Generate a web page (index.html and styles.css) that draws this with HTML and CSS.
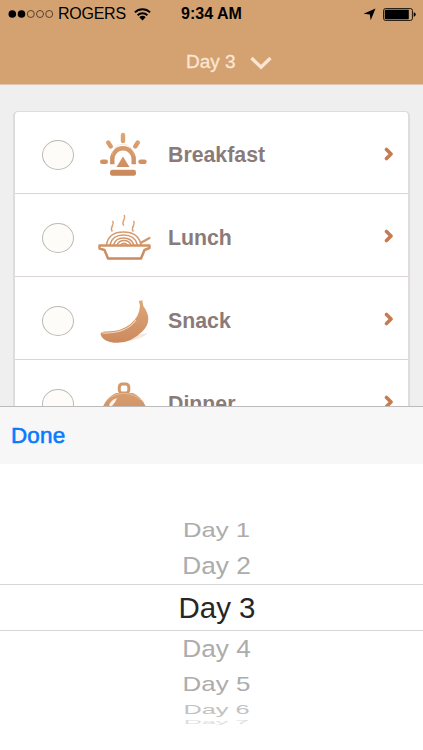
FILE: index.html
```html
<!DOCTYPE html>
<html lang="en">
<head>
<meta charset="utf-8">
<title>Meals</title>
<link rel="stylesheet" href="styles.css">
</head>
<body>
<svg class="defs" width="0" height="0" aria-hidden="true">
  <defs>
    <linearGradient id="copper" gradientUnits="userSpaceOnUse" x1="0" y1="10" x2="0" y2="60">
      <stop offset="0" stop-color="#dfa878"/><stop offset="1" stop-color="#c8855a"/>
    </linearGradient>
    <symbol id="chevron" viewBox="0 0 10 14"><path d="M2.500 2.500l4.500 4.500-4.500 4.500" fill="none" stroke="#c67c50" stroke-width="3.600" stroke-linecap="round" stroke-linejoin="round"/></symbol>
  </defs>
</svg>
<div class="screen">
  <header class="header">
    <div class="status">
      <div class="carrier">
        <svg width="46" height="10" viewBox="0 0 46 10"><g fill="#000"><circle cx="4.3" cy="5" r="3.8"/><circle cx="13.5" cy="5" r="3.8"/></g><g fill="none" stroke="#38291c" stroke-width=".8"><circle cx="22.8" cy="5" r="3.5"/><circle cx="32" cy="5" r="3.5"/><circle cx="41.2" cy="5" r="3.5"/></g></svg>
        <span class="network">ROGERS</span>
        <svg class="wifi" width="17" height="13" viewBox="0 0 17 13"><g fill="none" stroke="#000" stroke-width="1.9"><path d="M.9 4.4a10.8 10.8 0 0 1 15.2 0"/><path d="M3.6 7.3a7 7 0 0 1 9.8 0"/></g><path d="M5.3 9.2a4.5 4.5 0 0 1 6.4 0L8.5 12.4z"/></svg>
      </div>
      <span class="time">9:34 AM</span>
      <div class="power">
        <svg width="13" height="13" viewBox="0 0 13 13"><path d="M12.5.5L7.7 12.3 6.8 6.4.6 5.7z"/></svg>
        <svg width="33" height="13" viewBox="0 0 33 13"><rect x=".6" y=".6" width="28.8" height="11.8" rx="1.8" fill="none" stroke="#1c140d"/><rect x="1.8" y="1.8" width="24" height="9.4" rx=".8"/><path d="M30.7 4.3q2 .5 2 2.2t-2 2.2z"/></svg>
      </div>
    </div>
    <div class="title">
      <span>Day 3</span>
      <svg width="22" height="14" viewBox="0 0 22 14"><path d="M1.500 2l9.500 9.300L20.500 2" fill="none" stroke="#fce6d3" stroke-width="3.300"/></svg>
    </div>
  </header>
  <main class="content">
    <ul class="meals">
      <li class="meal">
        <span class="check"></span>
        <svg class="icon sunrise" viewBox="0 0 70 70"><g fill="none" stroke="url(#copper)" stroke-width="4.400" stroke-linecap="round"><path d="M33 15v6M18.200 22.500l2.600 4M47.800 22.500l-2.600 4M12.200 41.800h3.600M50.500 41.800h4"/><path d="M22.300 44.300v-5.300a10.700 10.700 0 0 1 21.400 0v5.300" stroke-linecap="butt"/></g><rect x="20" y="49.800" width="26" height="6" rx="2.400" fill="url(#copper)"/><path d="M33 36.500L39.500 47h-13z" fill="url(#copper)"/><path d="M22.300 35a10.700 10.700 0 0 1 21.400 0" fill="none" stroke="#f0c9a5" stroke-width=".7" opacity=".6"/></svg>
        <span class="name">Breakfast</span><svg class="arrow"><use href="#chevron"/></svg>
      </li>
      <li class="meal">
        <span class="check"></span>
        <svg class="icon bowl" viewBox="0 0 70 70"><g fill="none" stroke="url(#copper)" stroke-width="1.5" stroke-linecap="round" stroke-linejoin="round"><path d="M16.500 40q2-13 17-13T51 40M20 40q2-10 13.500-10T47.500 40M23.500 40q2-7 10-7t10.500 7M27 40q2-4.500 7-4.500t7 4.500M30.500 40q3.500-3.500 7 0"/><path d="M22 26c-2.500-4 3-6 .8-9.500M33.500 20c-2.500-4 3-6 .8-9.500M43 26c-2.500-4 3-6 .8-9.500"/><path stroke-width="2.200" d="M51 37.800l8.500-4.800"/><path stroke-width="2.500" d="M9.500 40.500h50v2.500l-5 2-3.500 8.500H18L14.500 45l-5-1.500z" fill="#fff"/></g></svg>
        <span class="name">Lunch</span><svg class="arrow"><use href="#chevron"/></svg>
      </li>
      <li class="meal">
        <span class="check"></span>
        <svg class="icon banana" viewBox="0 0 70 70"><path d="M33 52Q47 44 57 43Q54 49 33 52z" fill="#f3e7df"/><path d="M48.800 10.900l3.500-.6 1 5.700q10.500 14-1 25.500Q38 56 20 52q-8-2-9.500-8 .5-2.500 5-2.500 15 .5 25-7.500 9-7.500 9.500-18.500z" fill="url(#copper)"/><path d="M12 43q24 1 34-13" fill="none" stroke="#f3d4b8" stroke-width="1.200"/></svg>
        <span class="name">Snack</span><svg class="arrow"><use href="#chevron"/></svg>
      </li>
      <li class="meal">
        <span class="check"></span>
        <svg class="icon cloche" viewBox="0 0 70 70"><path d="M10.500 48q2-18 15.500-24h17q13 6 15.500 24z" fill="url(#copper)"/><rect x="29.300" y="15" width="9.500" height="9" rx="3" fill="#fff" stroke="#d29a6b" stroke-width="3"/><path d="M19 36q2-5 8-7-1 4-6 9z" fill="#fff3e8"/><path d="M17 31q7-6.500 17-6.500t17 6.500" fill="none" stroke="#e8bd97" stroke-width="1"/></svg>
        <span class="name">Dinner</span><svg class="arrow"><use href="#chevron"/></svg>
      </li>
    </ul>
  </main>
  <section class="sheet">
    <div class="toolbar"><span class="done">Done</span></div>
    <div class="picker">
      <div class="option d1"><span>Day 1</span></div>
      <div class="option d2"><span>Day 2</span></div>
      <div class="option selected"><span>Day 3</span></div>
      <div class="option d4"><span>Day 4</span></div>
      <div class="option d5"><span>Day 5</span></div>
      <div class="option d6"><span>Day 6</span></div>
      <div class="option d7"><span>Day 7</span></div>
    </div>
  </section>
</div>
</body>
</html>
```
FILE: styles.css
```css
* { box-sizing: border-box; }
body { margin: 0; font-family: "Liberation Sans", Arial, sans-serif; background: #fff; }
svg { display: block; flex: none; }
.defs { position: absolute; }
.screen { width: 423px; height: 750px; overflow: hidden; display: flex; flex-direction: column; }
.header { height: 85px; flex: none; background: #d4a271; border-bottom: 1px solid #dfc3ac; }
.status { height: 28px; padding: 0 8px; display: grid; grid-template-columns: 1fr auto 1fr; align-items: center; color: #000; }
.carrier { display: flex; align-items: center; }
.network { margin-left: 4px; font-size: 16px; letter-spacing: -.25px; line-height: 28px; }
.wifi { margin-left: 8px; }
.time { font-size: 16px; font-weight: bold; line-height: 28px; letter-spacing: 0; }
.power { display: flex; align-items: center; justify-content: flex-end; gap: 7px; margin-right: -1px; }
.title { height: 56px; padding: 11px 0 0 186px; display: flex; gap: 14px; align-items: flex-start; color: #fce6d3; font-size: 19px; -webkit-text-stroke: .3px #fce6d3; }
.title span { line-height: 46px; }
.title svg { margin-top: 17px; }
.content { height: 321px; flex: none; overflow: hidden; background: #efeff0; padding: 26px 13px 0; }
.meals { list-style: none; margin: 0; padding: 0; background: #fff; border: 2px solid #dedcdd; border-top-width: 1px; border-radius: 5px; }
.meal { height: 83px; display: flex; align-items: center; padding: 3px 14px 0 27px; border-bottom: 1px solid #ddd5d5; }
.meal:first-child { height: 82px; }
.check { width: 32px; height: 30px; flex: none; border: 1px solid #bdb9b5; border-radius: 50%; background: #fdfcf8; margin-top: 3px; }
.meal:first-child .check { margin-top: 1px; }
.icon { width: 70px; height: 70px; margin-left: 16px; }
.sunrise { transform: translateY(1px); }
.bowl { transform: translateY(3px); }
.banana { transform: translateY(5px); }
.cloche { transform: translateY(1px); }
.name { flex: 1; margin-left: 8px; font-size: 21.3px; font-weight: bold; color: #8a7b79; line-height: 30px; padding-top: 2px; }
.arrow { width: 10px; height: 14px; margin-bottom: 1px; }
.sheet { height: 344px; flex: none; background: #fff; }
.toolbar { height: 58px; background: #f7f7f7; border-top: 1px solid #bcbabb; padding-left: 11px; }
.done { font-size: 22.4px; line-height: 58px; color: #087aff; -webkit-text-stroke: .6px #087aff; letter-spacing: .2px; }
.picker { padding-top: 48px; }
.option { display: flex; align-items: center; justify-content: center; height: 36px; padding-left: 11px; font-size: 29.5px; line-height: 30px; color: #acacac; }
.option span { flex: none; }
.selected { height: 47px; color: #262626; border-top: 1px solid #d6d6d6; border-bottom: 1px solid #d6d6d6; }
.d1 span { transform: scale(.87, .68); }
.d2 span { transform: scale(.89, .84); }
.d4 { height: 36px; }
.d4 span { transform: scale(.89, .84); }
.d5 { height: 34px; }
.d5 span { transform: scale(.88, .67); }
.d6 { height: 17px; color: #c2c2c2; }
.d6 span { transform: scale(.86, .44); }
.d7 { height: 8px; color: #ddd; }
.d7 span { transform: scale(.85, .18); }
```
